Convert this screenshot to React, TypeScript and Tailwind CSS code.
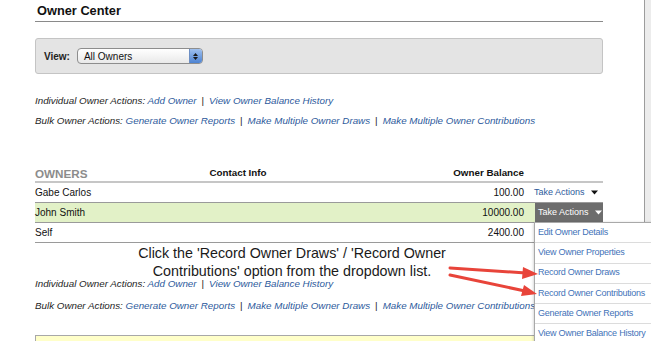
import React from 'react';

const linkClass = 'text-[#2d5a9c]';

const ActionLinks: React.FC<{ label: string; links: string[] }> = ({ label, links }) => (
  <p className="h-[14px] text-[9.8px] leading-[14px] italic text-[#1e1e1e] whitespace-nowrap">
    {label}{' '}
    {links.map((l, i) => (
      <React.Fragment key={l}>
        {i > 0 && <span className="px-[5px] not-italic">|</span>}
        <a className={linkClass}>{l}</a>
      </React.Fragment>
    ))}
  </p>
);

const Caret: React.FC<{ color: string }> = ({ color }) => (
  <svg width="7" height="5" viewBox="0 0 7 5" className="ml-[6px]">
    <path d="M0 0.5 L7 0.5 L3.5 4.5 Z" fill={color} />
  </svg>
);

const menuItems = [
  'Edit Owner Details',
  'View Owner Properties',
  'Record Owner Draws',
  'Record Owner Contributions',
  'Generate Owner Reports',
  'View Owner Balance History',
];

const owners = [
  { name: 'Gabe Carlos', balance: '100.00' },
  { name: 'John Smith', balance: '10000.00', active: true },
  { name: 'Self', balance: '2400.00' },
];

const App: React.FC = () => {
  return (
    <div
      className="relative w-[651px] h-[341px] overflow-hidden bg-white flex"
      style={{ fontFamily: '"Liberation Sans", Arial, sans-serif' }}
    >
      {/* Main column */}
      <div className="w-[644px] pl-[35px]">
        <div className="w-[568px]">
          {/* Heading */}
          <div className="h-[22px] border-b border-[#8a8a8a] flex items-center">
            <h1 className="pl-[2px] text-[12.8px] font-bold text-[#111]">Owner Center</h1>
          </div>

          {/* View filter */}
          <div className="mt-[16px] h-[36px] rounded-[3px] border border-[#c4c4c4] bg-[#e4e4e4] flex items-center pl-[8px]">
            <span className="text-[10px] font-bold text-[#222]">View:</span>
            <div className="ml-[7px] w-[126px] h-[16px] rounded-[4px] border border-[#8d8d8d] bg-gradient-to-b from-white to-[#e9e9e9] flex items-center overflow-hidden">
              <span className="flex-1 pl-[6px] text-[10px] text-[#111]">All Owners</span>
              <div className="w-[13px] h-full bg-gradient-to-b from-[#9fc0ee] to-[#4d83d2] border-l border-[#6d8fc4] flex flex-col items-center justify-center gap-[1px]">
                <svg width="5" height="3" viewBox="0 0 5 3"><path d="M0 3 L5 3 L2.5 0 Z" fill="#1a1a1a" /></svg>
                <svg width="5" height="3" viewBox="0 0 5 3"><path d="M0 0 L5 0 L2.5 3 Z" fill="#1a1a1a" /></svg>
              </div>
            </div>
          </div>

          <div className="mt-[20px]">
            <ActionLinks label="Individual Owner Actions:" links={['Add Owner', 'View Owner Balance History']} />
          </div>
          <div className="mt-[6px]">
            <ActionLinks
              label="Bulk Owner Actions:"
              links={['Generate Owner Reports', 'Make Multiple Owner Draws', 'Make Multiple Owner Contributions']}
            />
          </div>

          {/* Owners table */}
          <div className="mt-[37px]">
            <div className="grid grid-cols-[150px_106px_1fr_68px] h-[18px] items-center border-b-2 border-[#c6c6c6]">
              <span className="text-[11.7px] font-bold text-[#8c8c8c]">OWNERS</span>
              <span className="text-[9.8px] font-bold text-[#111] text-center">Contact Info</span>
              <span className="text-[9.8px] font-bold text-[#111] text-right pr-[11px]">Owner Balance</span>
              <span />
            </div>
            {owners.map(o => (
              <div
                key={o.name}
                className={`relative grid grid-cols-[150px_106px_1fr_68px] h-[20px] items-center border-b border-[#9a9a9a] ${o.active ? 'bg-[#e2f1c7]' : ''}`}
              >
                <span className="text-[10px] text-[#111]">{o.name}</span>
                <span />
                <span className="text-[10px] text-[#111] text-right pr-[11px]">{o.balance}</span>
                {o.active ? (
                  <div className="h-full bg-[#6d6d6d] flex items-center pl-[3px] text-[9px] text-white">
                    Take Actions
                    <Caret color="#ffffff" />
                  </div>
                ) : o.name === 'Gabe Carlos' ? (
                  <div className="h-full bg-white flex items-center text-[9px] text-[#2d5a9c] -ml-[1px]">
                    Take Actions
                    <Caret color="#111111" />
                  </div>
                ) : (
                  <div className="h-full bg-white" />
                )}
              </div>
            ))}
          </div>

          <div className="mt-[34px]">
            <ActionLinks label="Individual Owner Actions:" links={['Add Owner', 'View Owner Balance History']} />
          </div>
          <div className="mt-[8px]">
            <ActionLinks
              label="Bulk Owner Actions:"
              links={['Generate Owner Reports', 'Make Multiple Owner Draws', 'Make Multiple Owner Contributions']}
            />
          </div>

          <div className="mt-[22px] h-[30px] border border-[#a8a8a8] bg-[#ffffc9]" />
        </div>
      </div>

      {/* Window scrollbar strip */}
      <div className="w-[7px] h-full border-l border-[#9c9c9c] bg-[#ececec]" />

      {/* Dropdown menu */}
      <div className="absolute left-[534px] top-[222px] w-[125px] bg-white border-l border-t border-[#a9a9a9] shadow-[0_1px_3px_rgba(0,0,0,0.25)]">
        {menuItems.map(item => (
          <div
            key={item}
            className="h-[20.3px] flex items-center pl-[3px] border-b border-[#dcdcdc] text-[9px] tracking-[-0.25px] text-[#3f72b8] whitespace-nowrap"
          >
            {item}
          </div>
        ))}
      </div>

      {/* Annotation */}
      <div className="absolute left-[100px] top-[244px] w-[384px] text-center text-[14.3px] leading-[18px] text-[#1a1a1a]">
        <p>Click the 'Record Owner Draws' / 'Record Owner</p>
        <p>Contributions' option from the dropdown list.</p>
      </div>

      <svg className="absolute left-0 top-0 pointer-events-none" width="651" height="341" viewBox="0 0 651 341">
        <g stroke="#e8443a" strokeWidth="3" strokeLinecap="round">
          <line x1="450" y1="268" x2="526" y2="273" />
          <line x1="450" y1="275" x2="525" y2="291" />
        </g>
        <g fill="#e8443a">
          <path d="M538 274 L523 267 L522 279 Z" />
          <path d="M537 294 L524 285 L521 296 Z" />
        </g>
      </svg>
    </div>
  );
};

export default App;
